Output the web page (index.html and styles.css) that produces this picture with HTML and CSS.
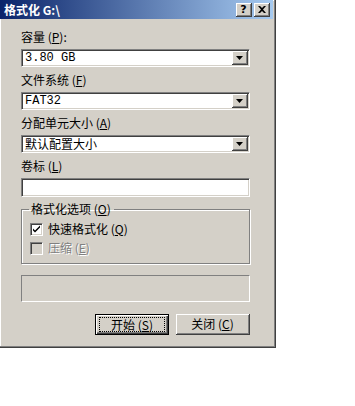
FILE: index.html
```html
<!DOCTYPE html>
<html lang="zh-CN">
<head>
  <meta charset="UTF-8">
  <meta name="viewport" content="width=device-width, initial-scale=1.0">
  <title>格式化 G:\</title>
  <link rel="stylesheet" href="styles.css">
</head>
<body>

  <div class="window">
    <div class="titlebar">
      <span class="title">格式化 G:\</span>
      <div class="caption-buttons">
        <span class="cap-btn">?</span>
        <span class="cap-btn cap-close">
          <svg width="8" height="7" viewBox="0 0 8 7"><path d="M0 0h2l2 2 2-2h2L5 3.5 8 7H6L4 5 2 7H0l3-3.5z" fill="#000"/></svg>
        </span>
      </div>
    </div>

    <div class="content">
      <label class="field-label">容量 (<u>P</u>):</label>
      <div class="combo">
        <span class="combo-text mono">3.80 GB</span>
        <span class="combo-arrow"><svg width="7" height="4" viewBox="0 0 7 4"><path d="M0 0h7L3.5 4z" fill="#000"/></svg></span>
      </div>

      <label class="field-label">文件系统 (<u>F</u>)</label>
      <div class="combo">
        <span class="combo-text mono">FAT32</span>
        <span class="combo-arrow"><svg width="7" height="4" viewBox="0 0 7 4"><path d="M0 0h7L3.5 4z" fill="#000"/></svg></span>
      </div>

      <label class="field-label">分配单元大小 (<u>A</u>)</label>
      <div class="combo">
        <span class="combo-text">默认配置大小</span>
        <span class="combo-arrow"><svg width="7" height="4" viewBox="0 0 7 4"><path d="M0 0h7L3.5 4z" fill="#000"/></svg></span>
      </div>

      <label class="field-label">卷标 (<u>L</u>)</label>
      <div class="textbox"></div>

      <fieldset class="group">
        <legend>格式化选项 (<u>O</u>)</legend>
        <div class="check-row">
          <span class="checkbox">
            <svg width="9" height="9" viewBox="0 0 9 9"><path d="M1 3.5l2 2 5-5v2l-5 5-2-2z" fill="#000"/></svg>
          </span>
          <span>快速格式化 (<u>Q</u>)</span>
        </div>
        <div class="check-row disabled">
          <span class="checkbox off"></span>
          <span>压缩 (<u>E</u>)</span>
        </div>
      </fieldset>

      <div class="progress"></div>

      <div class="button-row">
        <div class="btn default"><span class="focus">开始 (<u>S</u>)</span></div>
        <div class="btn">关闭 (<u>C</u>)</div>
      </div>
    </div>
  </div>

</body>
</html>
```

FILE: styles.css
```css
body {
  margin: 0;
  padding: 0;
  background-color: #fff;
  font-family: "Noto Sans CJK SC", "DejaVu Sans", sans-serif;
  font-size: 12px;
  color: #000;
}

.window {
  width: 276px;
  height: 348px;
  box-sizing: border-box;
  background-color: #d4d0c8;
  border-right: 1px solid #404040;
  border-bottom: 1px solid #404040;
  box-shadow: inset -1px -1px 0 #808080, inset 1px 1px 0 #fff;
}

.titlebar {
  height: 19px;
  margin: 0 2px 0 0;
  background: linear-gradient(to right, #0a246a, #a6caf0);
  display: flex;
  align-items: center;
  justify-content: space-between;
  padding: 0 3px 0 4px;
}

.title {
  color: #fff;
  font-weight: bold;
  font-size: 12px;
  line-height: 14px;
}

.caption-buttons {
  display: flex;
  gap: 2px;
}

.cap-btn {
  width: 16px;
  height: 14px;
  box-sizing: border-box;
  background-color: #d4d0c8;
  border-right: 1px solid #404040;
  border-bottom: 1px solid #404040;
  box-shadow: inset 1px 1px 0 #fff, inset -1px -1px 0 #808080;
  display: flex;
  align-items: center;
  justify-content: center;
  font-family: "DejaVu Sans", sans-serif;
  font-weight: bold;
  font-size: 11px;
  line-height: 11px;
}

.content {
  padding: 11px 0 0 21px;
  width: 229px;
}

.field-label {
  display: block;
  line-height: 14px;
  height: 14px;
  margin-bottom: 5px;
}

.combo,
.textbox {
  height: 18px;
  box-sizing: border-box;
  background-color: #fff;
  border-top: 1px solid #808080;
  border-left: 1px solid #808080;
  border-right: 1px solid #fff;
  border-bottom: 1px solid #fff;
  box-shadow: inset 1px 1px 0 #404040, inset -1px -1px 0 #d4d0c8;
  display: flex;
  align-items: center;
  justify-content: space-between;
  margin-bottom: 6px;
}

.combo-text {
  padding-left: 3px;
  line-height: 14px;
}

.mono {
  font-family: "Liberation Mono", "Noto Sans CJK SC", monospace;
}

.combo-arrow {
  width: 16px;
  height: 14px;
  margin-right: 1px;
  box-sizing: border-box;
  background-color: #d4d0c8;
  border-right: 1px solid #404040;
  border-bottom: 1px solid #404040;
  box-shadow: inset 1px 1px 0 #fff, inset -1px -1px 0 #808080;
  display: flex;
  align-items: center;
  justify-content: center;
}

.textbox {
  height: 19px;
  margin-bottom: 5px;
}

.group {
  margin: 0;
  padding: 6px 0 8px 8px;
  border: 1px solid #808080;
  box-shadow: inset 1px 1px 0 #fff, 1px 1px 0 #fff;
}

.group legend {
  padding: 0 3px 0 2px;
  margin-left: -1px;
  line-height: 14px;
  height: 14px;
}

.check-row {
  display: flex;
  align-items: center;
  gap: 5px;
  height: 14px;
  line-height: 14px;
}

.check-row + .check-row {
  margin-top: 5px;
}

.checkbox {
  width: 13px;
  height: 13px;
  box-sizing: border-box;
  background-color: #fff;
  border-top: 1px solid #808080;
  border-left: 1px solid #808080;
  border-right: 1px solid #fff;
  border-bottom: 1px solid #fff;
  box-shadow: inset 1px 1px 0 #404040, inset -1px -1px 0 #d4d0c8;
  display: flex;
  align-items: center;
  justify-content: center;
}

.checkbox.off {
  background-color: #d4d0c8;
}

.disabled {
  color: #808080;
  text-shadow: 1px 1px 0 #fff;
}

.progress {
  margin-top: 11px;
  height: 27px;
  box-sizing: border-box;
  border-top: 1px solid #808080;
  border-left: 1px solid #808080;
  border-right: 1px solid #fff;
  border-bottom: 1px solid #fff;
}

.button-row {
  display: flex;
  justify-content: flex-end;
  gap: 7px;
  margin-top: 12px;
}

.btn {
  width: 74px;
  height: 21px;
  box-sizing: border-box;
  background-color: #d4d0c8;
  border-right: 1px solid #404040;
  border-bottom: 1px solid #404040;
  box-shadow: inset 1px 1px 0 #fff, inset -1px -1px 0 #808080;
  display: flex;
  align-items: center;
  justify-content: center;
  line-height: 14px;
}

.btn.default {
  border: 1px solid #000;
  box-shadow: inset 1px 1px 0 #fff, inset -1px -1px 0 #404040, inset -2px -2px 0 #808080;
}

.focus {
  display: flex;
  align-items: center;
  justify-content: center;
  width: 64px;
  height: 13px;
  border: 1px dotted #000;
}
```
